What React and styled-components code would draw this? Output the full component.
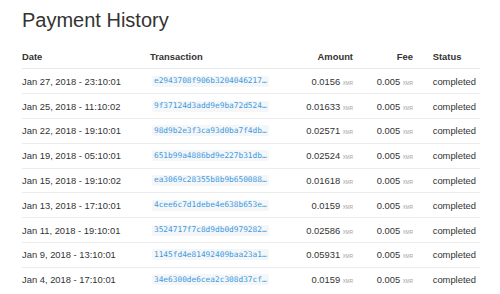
import React from 'react';
import styled, { createGlobalStyle } from 'styled-components';

const GlobalStyle = createGlobalStyle`
  html, body {
    margin: 0;
    padding: 0;
    background: #fff;
  }
  body {
    font-family: "Liberation Sans", Arial, Helvetica, sans-serif;
    color: #333;
  }
`;

const Page = styled.div`
  padding: 9.2px 20px 0 22px;
`;

const Title = styled.h2`
  margin: 0 0 13.6px;
  font-size: 20px;
  line-height: 22px;
  font-weight: 400;
  color: #333;
`;

const Table = styled.table`
  width: 458px;
  table-layout: fixed;
  border-collapse: collapse;
  font-size: 9.4px;
`;

const Head = styled.th`
  padding: 5.33px 0;
  padding-left: ${({ $pl }) => $pl || 0}px;
  line-height: 13px;
  font-weight: 700;
  text-align: ${({ $align }) => $align || 'left'};
  border-bottom: 1px solid #e9e9e9;
  white-space: nowrap;
`;

const Row = styled.tr`
  border-top: 1px solid #ececec;
  &:first-child { border-top: none; }
`;

const Cell = styled.td`
  height: 13px;
  padding: 5.4px 0;
  padding-left: ${({ $pl }) => $pl || 0}px;
  line-height: 13px;
  text-align: ${({ $align }) => $align || 'left'};
  white-space: nowrap;
  vertical-align: middle;
`;

const Hash = styled.code`
  display: inline-block;
  vertical-align: middle;
  margin: -2px 0 0 1.7px;
  max-width: 112.7px;
  padding: 1.5px 2.3px;
  font-family: "DejaVu Sans Mono", "Liberation Mono", monospace;
  font-size: 7.8px;
  line-height: 8px;
  color: #3d9be0;
  background: #f4f6f8;
  border-radius: 2px;
  overflow: hidden;
  text-overflow: ellipsis;
  white-space: nowrap;
`;

const Unit = styled.small`
  font-size: 4.6px;
  line-height: 0;
  color: #a0a0a0;
`;

const payments = [
  { date: 'Jan 27, 2018 - 23:10:01', tx: 'e2943708f906b3204046217a9c1d0e5f7b3a2c48d61e9f0b7a3c5d2e8f1a4b6c', amount: '0.0156' },
  { date: 'Jan 25, 2018 - 11:10:02', tx: '9f37124d3add9e9ba72d524c8e1f3a6b0d9c2e7f4a1b5d8c3e6f9a2b7c0d4e1f', amount: '0.01633' },
  { date: 'Jan 22, 2018 - 19:10:01', tx: '98d9b2e3f3ca93d0ba7f4db1e5c8a2f6d3b9e0c7a4f1d8b2e5c9a3f6d0b7e4c1', amount: '0.02571' },
  { date: 'Jan 19, 2018 - 05:10:01', tx: '651b99a4886bd9e227b31db6f2a8c4e0d7b3f9a1c5e8d2b6f0a4c7e3d9b1f5a8', amount: '0.02524' },
  { date: 'Jan 15, 2018 - 19:10:02', tx: 'ea3069c28355b8b9b650088d4f1a7c3e9b2d6f0a8c5e1b4d7f3a9c2e6b0d8f5a', amount: '0.01618' },
  { date: 'Jan 13, 2018 - 17:10:01', tx: '4cee6c7d1debe4e638b653e2a9f5c1d7b4e0a8f3c6d2b9e5a1f7c4d0b8e3a6f2', amount: '0.0159' },
  { date: 'Jan 11, 2018 - 19:10:01', tx: '3524717f7c8d9db0d979282b5e1a8f4c0d6b3e9a2f7c5d1b8e4a0f6c3d9b2e7a', amount: '0.02586' },
  { date: 'Jan 9, 2018 - 13:10:01', tx: '1145fd4e81492409baa23a1c7e3b9f5d2a8c4e0b6f1d7a3c9e5b2f8d4a0c6e1b', amount: '0.05931' },
  { date: 'Jan 4, 2018 - 17:10:01', tx: '34e6300de6cea2c308d37cf9b5a1e7d3c0f6b2a8e4d1c7f3b9a5e2d8c4f0a6b3', amount: '0.0159' },
];

const App = () => (
  <Page>
    <GlobalStyle />
    <Title>Payment History</Title>
    <Table>
      <colgroup>
        <col style={{ width: 128 }} />
        <col style={{ width: 140 }} />
        <col style={{ width: 63 }} />
        <col style={{ width: 60 }} />
        <col style={{ width: 67 }} />
      </colgroup>
      <thead>
        <tr>
          <Head>Date</Head>
          <Head>Transaction</Head>
          <Head $align="right">Amount</Head>
          <Head $align="right">Fee</Head>
          <Head $pl={19.7}>Status</Head>
        </tr>
      </thead>
      <tbody>
        {payments.map((p) => (
          <Row key={p.tx}>
            <Cell>{p.date}</Cell>
            <Cell><Hash>{p.tx}</Hash></Cell>
            <Cell $align="right">{p.amount} <Unit>XMR</Unit></Cell>
            <Cell $align="right">0.005 <Unit>XMR</Unit></Cell>
            <Cell $pl={19.7}>completed</Cell>
          </Row>
        ))}
      </tbody>
    </Table>
  </Page>
);

export default App;
